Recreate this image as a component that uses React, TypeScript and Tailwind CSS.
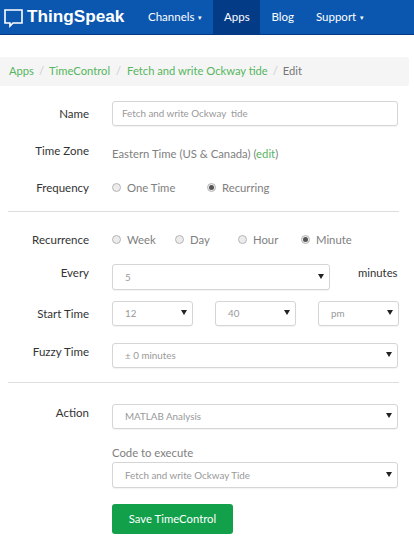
const font = { fontFamily: 'Lato, sans-serif' };

const Caret = () => (
  <svg width="6" height="5" viewBox="0 0 6 5" className="mb-[2px] shrink-0">
    <path d="M0 0h6L3 5z" fill="#222" />
  </svg>
);

const Select = ({ value, className }: { value: string; className: string }) => (
  <div
    className={`flex items-center justify-between rounded-[3px] border border-[#d5d5d5] bg-white pr-[5px] shadow-[0_1px_1px_rgba(0,0,0,0.05)] ${className}`}
  >
    <span className="text-[9.8px] text-[#999]">{value}</span>
    <Caret />
  </div>
);

const Radio = ({
  label,
  checked,
  className,
}: {
  label: string;
  checked?: boolean;
  className: string;
}) => (
  <span className={`flex items-center ${className}`}>
    <span className="mb-[2px] flex h-[9px] w-[9px] items-center justify-center rounded-full border border-[#b5b5b5] bg-[#ececec]">
      {checked && <span className="h-[5px] w-[5px] rounded-full bg-[#555]" />}
    </span>
    <span className="ml-[6px] text-[11.3px] text-[#808080]">{label}</span>
  </span>
);

const Label = ({ children }: { children: string }) => (
  <div className="w-[89px] shrink-0 text-right text-[11.5px] leading-[18px] text-[#333]">
    {children}
  </div>
);

export default function App() {
  return (
    <div className="h-[555px] w-[414px] overflow-hidden bg-white" style={font}>
      <nav className="flex h-[35px] items-stretch border-b border-[#03377f] bg-[#0b57b0] text-white">
        <div className="flex w-[140px] items-center pl-[3px]">
          <svg width="21" height="20" viewBox="0 0 21 20" fill="none" stroke="white" strokeWidth="1.6" className="mt-[1px]">
            <path d="M2 2h17v13H10l-3 3v-3H2z" />
          </svg>
          <span
            className="ml-[3px] text-[17.2px] font-bold leading-none"
            style={{ fontFamily: '"Liberation Sans", sans-serif' }}
          >
            ThingSpeak
          </span>
        </div>
        <div className="flex items-center pl-[8px] text-[11.5px]">
          Channels
          <span className="ml-[4px] text-[7px]">▾</span>
        </div>
        <div className="ml-[11px] flex w-[47px] items-center justify-center bg-[#033b87] text-[11.5px]">
          Apps
        </div>
        <div className="ml-[11px] flex items-center text-[11.5px]">Blog</div>
        <div className="ml-[22px] flex items-center text-[11.5px]">
          Support
          <span className="ml-[4px] text-[7px]">▾</span>
        </div>
      </nav>

      <div className="mt-[22px] flex h-[29px] w-[409px] items-center rounded-r-[3px] bg-[#f5f5f5] pl-[9px] text-[11.2px] text-[#55b560]">
        <span>Apps</span>
        <span className="mx-[5px] text-[#ccc]">/</span>
        <span>TimeControl</span>
        <span className="mx-[6px] text-[#ccc]">/</span>
        <span>Fetch and write Ockway tide</span>
        <span className="mx-[5px] text-[#ccc]">/</span>
        <span className="text-[#777]">Edit</span>
      </div>

      <div className="mt-[15px] flex items-center">
        <Label>Name</Label>
        <div className="ml-[23px] flex h-[25px] w-[286px] items-center rounded-[3px] border border-[#d5d5d5] pl-[9px] text-[9.8px] text-[#999] shadow-[0_1px_1px_rgba(0,0,0,0.05)]">
          Fetch and write Ockway&nbsp; tide
        </div>
      </div>

      <div className="mt-[16px] flex items-start">
        <Label>Time Zone</Label>
        <div className="ml-[23px] mt-[3px] text-[11.3px] leading-[18px] text-[#808080]">
          Eastern Time (US &amp; Canada) (<span className="text-[#55b560]">edit</span>)
        </div>
      </div>

      <div className="mt-[16px] flex items-center">
        <Label>Frequency</Label>
        <div className="ml-[23px] flex">
          <Radio label="One Time" className="w-[95px]" />
          <Radio label="Recurring" checked className="" />
        </div>
      </div>

      <div className="ml-[8px] mt-[14px] h-px w-[391px] bg-[#ddd]" />

      <div className="mt-[19px] flex items-center">
        <Label>Recurrence</Label>
        <div className="ml-[23px] flex">
          <Radio label="Week" className="w-[63px]" />
          <Radio label="Day" className="w-[63px]" />
          <Radio label="Hour" className="w-[63px]" />
          <Radio label="Minute" checked className="" />
        </div>
      </div>

      <div className="mt-[15px] flex items-start">
        <Label>Every</Label>
        <Select value="5" className="ml-[23px] h-[26px] w-[218px] pl-[12px]" />
        <div className="ml-[28px] text-[11.3px] leading-[18px] text-[#333]">minutes</div>
      </div>

      <div className="mt-[11px] flex items-center">
        <Label>Start Time</Label>
        <div className="ml-[23px] flex gap-[22px]">
          <Select value="12" className="h-[25px] w-[81px] pl-[12px]" />
          <Select value="40" className="h-[25px] w-[81px] pl-[12px]" />
          <Select value="pm" className="h-[25px] w-[81px] pl-[12px]" />
        </div>
      </div>

      <div className="mt-[17px] flex items-start">
        <Label>Fuzzy Time</Label>
        <Select value="± 0 minutes" className="ml-[23px] h-[25px] w-[286px] pl-[12px]" />
      </div>

      <div className="ml-[8px] mt-[14px] h-px w-[391px] bg-[#ddd]" />

      <div className="mt-[21px] flex items-start">
        <Label>Action</Label>
        <Select value="MATLAB Analysis" className="ml-[23px] h-[25px] w-[286px] pl-[12px]" />
      </div>

      <div className="ml-[112px] mt-[15px] text-[11.3px] leading-[18px] text-[#808080]">Code to execute</div>
      <Select value="Fetch and write Ockway Tide" className="ml-[112px] h-[26px] w-[286px] pl-[12px]" />

      <button className="ml-[112px] mt-[16px] flex h-[30px] w-[121px] items-center justify-center rounded-[3px] bg-[#12a04b] text-[11.3px] text-white">
        Save TimeControl
      </button>
    </div>
  );
}
